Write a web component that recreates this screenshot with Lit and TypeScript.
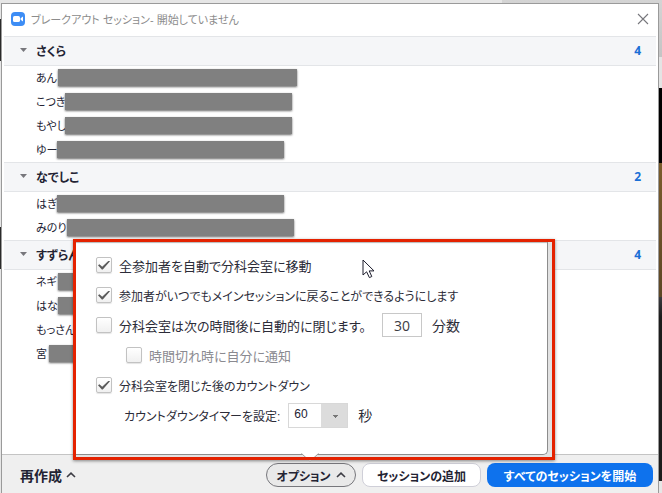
import { LitElement, html, css, svg, nothing } from "lit";
import { customElement } from "lit/decorators.js";

interface Member {
  name: string;
  nameWidth: number;
  maskWidth?: number;
}

interface Room {
  name: string;
  count: number;
  members: Member[];
}

const rooms: Room[] = [
  {
    name: "さくら",
    count: 4,
    members: [
      { name: "あん", nameWidth: 22, maskWidth: 239 },
      { name: "こつき", nameWidth: 29, maskWidth: 227 },
      { name: "もやし", nameWidth: 29, maskWidth: 227 },
      { name: "ゆー", nameWidth: 21, maskWidth: 227 },
    ],
  },
  {
    name: "なでしこ",
    count: 2,
    members: [
      { name: "はぎ", nameWidth: 21, maskWidth: 227 },
      { name: "みのり", nameWidth: 31, maskWidth: 227 },
    ],
  },
  {
    name: "すずらん",
    count: 4,
    members: [
      { name: "ネギ", nameWidth: 22, maskWidth: 227 },
      { name: "はな", nameWidth: 22, maskWidth: 227 },
      { name: "もっさん", nameWidth: 40 },
      { name: "宮", nameWidth: 13, maskWidth: 227 },
    ],
  },
];

const caret = () => html`<svg class="caret" viewBox="0 0 10 6" width="10" height="6" aria-hidden="true">
  ${svg`<path d="M1 5 L5 1.2 L9 5" fill="none" stroke="#3c3c44" stroke-width="1.6" />`}
</svg>`;

@customElement("option-popup")
export class OptionPopup extends LitElement {
  static styles = css`
    :host {
      display: block;
      box-sizing: border-box;
      padding: 3px 7px 5px 3px;
      background: #e2e2e2;
      box-shadow: 0 1px 3px rgba(0, 0, 0, 0.45);
      color: #2c2c38;
      font-size: 13px;
    }
    :host::after {
      content: "";
      position: absolute;
      inset: 0;
      border: 3px solid #e42200;
      pointer-events: none;
    }
    .panel {
      position: relative;
      box-sizing: border-box;
      border-right: 1px solid #8c8c8c;
      border-bottom: 1px solid #8c8c8c;
      border-radius: 0 0 5px 0;
      background: #fff;
      padding: 8px 16px 24px 20px;
      box-shadow: inset 0 2px 1px -1px #b9b9b9;
    }
    .row {
      display: flex;
      align-items: center;
      height: 30px;
      white-space: nowrap;
    }
    .row.kana {
      font-size: 12px;
    }
    .row.nested {
      padding-left: 30px;
      color: #8a8a90;
    }
    .row.timer {
      padding-left: 28px;
    }
    .unit {
      font-size: 14px;
    }
    label.tick {
      display: flex;
      align-items: center;
      gap: 7px;
    }
    .tick input {
      appearance: none;
      box-sizing: border-box;
      width: 16px;
      height: 16px;
      margin: 0;
      border: 1px solid #c2c2c2;
      border-radius: 2px;
      background: linear-gradient(#fff, #f0f0f0);
      display: grid;
      place-items: center;
      box-shadow: 0 1px 1px #e4e4e4;
    }
    .tick input:checked::after {
      content: "";
      width: 12px;
      height: 9px;
      background: #5a5a5a;
      clip-path: polygon(0 54%, 12% 42%, 35% 70%, 90% 0, 100% 8%, 40% 100%, 32% 100%);
    }
    .minutes {
      box-sizing: border-box;
      width: 40px;
      height: 24px;
      margin: 0 10px 0 16px;
      border: 1px solid #c8c8c8;
      padding: 0;
      text-align: center;
      font: 14px "Open Sans", "Noto Sans", sans-serif;
      color: #3c3c44;
      background: #fff;
    }
    .seconds {
      appearance: none;
      box-sizing: border-box;
      width: 60px;
      height: 25px;
      margin: 0 10px 0 8px;
      border: 1px solid #d8d8d8;
      border-radius: 0;
      padding: 0 0 2px 5px;
      font: 12px "Liberation Sans", sans-serif;
      color: #232333;
      background:
        linear-gradient(#777, #777) 44px 11px / 5px 1px no-repeat,
        linear-gradient(#777, #777) 45px 12px / 3px 1px no-repeat,
        linear-gradient(#777, #777) 46px 13px / 1px 1px no-repeat,
        linear-gradient(#dcdcdc, #dcdcdc) right / 26px 100% no-repeat,
        #fff;
    }
    .tail {
      position: absolute;
      left: 225px;
      top: 100%;
      width: 18px;
      height: 9px;
      margin-top: -1px;
      display: block;
    }
  `;

  render() {
    return html`
      <div class="panel">
        <div class="row">
          <label class="tick"><input type="checkbox" checked />全参加者を自動で分科会室に移動</label>
        </div>
        <div class="row kana">
          <label class="tick"><input type="checkbox" checked />参加者がいつでもメインセッションに戻ることができるようにします</label>
        </div>
        <div class="row">
          <label class="tick"><input type="checkbox" />分科会室は次の時間後に自動的に閉じます。</label>
          <input class="minutes" id="minutes" type="text" value="30" />
          <label class="unit" for="minutes">分数</label>
        </div>
        <div class="row nested">
          <label class="tick"><input type="checkbox" />時間切れ時に自分に通知</label>
        </div>
        <div class="row kana">
          <label class="tick"><input type="checkbox" checked />分科会室を閉じた後のカウントダウン</label>
        </div>
        <div class="row kana timer">
          <label for="seconds">カウントダウンタイマーを設定:</label>
          <select class="seconds" id="seconds"><option>60</option></select>
          <span class="unit">秒</span>
        </div>
        <svg class="tail" viewBox="0 0 18 9" aria-hidden="true">
          ${svg`<path d="M0 0 H18 L9 8.5 Z" fill="#fff" /><path d="M0.5 0.5 L9 8.3 L17.5 0.5" fill="none" stroke="#999" />`}
        </svg>
      </div>
    `;
  }
}

@customElement("app-root")
export class AppRoot extends LitElement {
  static styles = css`
    :host {
      display: block;
      box-sizing: border-box;
      min-height: 100vh;
      padding: 3px 3px 0 1px;
      font-family: "Liberation Sans", "Noto Sans CJK JP", sans-serif;
      font-feature-settings: "palt";
      font-size: 12px;
      color: #232333;
      background:
        linear-gradient(#2a2a2a, #2a2a2a) left 19px / 1px 42px no-repeat,
        linear-gradient(#2a2a2a, #2a2a2a) left 227px / 1px 42px no-repeat,
        linear-gradient(#d4d4d4, #c4c4c4) right top / 160px 57px no-repeat,
        linear-gradient(#e4e4e4, #e4e4e4) right 57px / 4px 31px no-repeat,
        linear-gradient(#000, #000) right 88px / 4px 75px no-repeat,
        linear-gradient(#7a5c2c, #5d4726) right 163px / 4px 134px no-repeat,
        linear-gradient(#3a3a3e, #1c1c1c) right 297px / 4px 20px no-repeat,
        linear-gradient(#1c1c1c, #1c1c1c) right 317px / 4px 164px no-repeat,
        #e6e6e6;
    }
    .dialog {
      position: relative;
      display: flex;
      flex-direction: column;
      box-sizing: border-box;
      min-height: calc(100vh - 3px);
      border: 1px solid #9a9a9a;
      border-bottom: 0;
      background: #fff;
    }
    header {
      display: flex;
      align-items: center;
      height: 32px;
      box-sizing: border-box;
      padding: 0 9px 3px 9px;
      gap: 6px;
    }
    h1 {
      flex: 1;
      margin: 0;
      font-size: 11px;
      font-weight: 400;
      color: #8c8c8c;
    }
    .close {
      width: 12px;
      height: 12px;
      padding: 0;
      border: 0;
      background: none;
      display: block;
    }
    svg {
      display: block;
    }
    main {
      flex: 1;
      padding: 0 2px;
    }
    .band {
      display: flex;
      align-items: center;
      box-sizing: border-box;
      height: 30px;
      padding: 0 15px 2px 16px;
      border: solid #e3e5e8;
      border-width: 1px 0;
      background: #f5f6f8;
    }
    .toggle {
      flex: 1;
      display: flex;
      align-items: center;
      gap: 9px;
      padding: 0;
      border: 0;
      background: none;
      font: inherit;
      font-weight: 700;
      color: inherit;
      font-feature-settings: inherit;
    }
    .count {
      font: 700 12px "Open Sans", "Noto Sans", sans-serif;
      color: #1a6fd6;
    }
    ul {
      list-style: none;
      margin: 0;
      padding: 0 0 0 32px;
      font-size: 11px;
    }
    li {
      display: flex;
      align-items: center;
      box-sizing: border-box;
      height: 24px;
      padding-bottom: 2px;
      white-space: nowrap;
    }
    .mask {
      position: relative;
      height: 17px;
      background: #808080;
      box-shadow: 0 1px 2px rgba(0, 0, 0, 0.6);
    }
    footer {
      display: flex;
      align-items: center;
      box-sizing: border-box;
      height: 39px;
      padding: 2px 5px 0 17px;
      gap: 6px;
      border-top: 1px solid #c4c4c4;
      background: #efefef;
    }
    footer button {
      display: flex;
      align-items: center;
      justify-content: center;
      gap: 5px;
      box-sizing: border-box;
      height: 24px;
      padding: 0;
      border: 1px solid transparent;
      background: none;
      font: inherit;
      font-weight: 700;
      font-feature-settings: inherit;
      color: #232333;
      white-space: nowrap;
    }
    footer .recreate {
      margin-right: auto;
      gap: 4px;
      font-size: 14px;
    }
    footer .options {
      width: 90px;
      border-color: #77777c;
      border-radius: 12px;
      background: #e9e9e9;
    }
    footer .add {
      width: 119px;
      border-color: #cfcfd8;
      border-radius: 8px;
      background: #fff;
    }
    footer .start {
      width: 166px;
      border-radius: 8px;
      background: #0e72ed;
      color: #fff;
    }
    option-popup {
      position: absolute;
      left: 71px;
      right: 103px;
      bottom: 33px;
    }
    .pointer {
      position: absolute;
      left: 360px;
      bottom: 214px;
    }
  `;

  private renderRoom(room: Room) {
    return html`
      <section>
        <div class="band">
          <button class="toggle">
            <svg viewBox="0 0 7 4" width="7" height="4" aria-hidden="true">
              ${svg`<path d="M0 0 H7 L3.5 4 Z" fill="#77777c" />`}
            </svg>
            ${room.name}
          </button>
          <span class="count">${room.count}</span>
        </div>
        <ul>
          ${room.members.map(
            (m) => html`<li>
              <span style="width:${m.nameWidth}px">${m.name}</span>
              ${m.maskWidth ? html`<span class="mask" style="width:${m.maskWidth}px"></span>` : nothing}
            </li>`
          )}
        </ul>
      </section>
    `;
  }

  render() {
    return html`
      <div class="dialog">
        <header>
          <svg viewBox="0 0 14 14" width="14" height="14" aria-hidden="true">
            ${svg`<rect width="14" height="14" rx="4" fill="#3d8df5" />
            <rect x="2" y="4" width="7" height="6" rx="1.6" fill="#fff" />
            <path d="M9.6 6.2 L12 4.4 V9.6 L9.6 7.8 Z" fill="#fff" />`}
          </svg>
          <h1>ブレークアウト セッション- 開始していません</h1>
          <button class="close" aria-label="閉じる">
            <svg viewBox="0 0 12 12" width="12" height="12">
              ${svg`<path d="M1 1 L11 11 M11 1 L1 11" fill="none" stroke="#77777c" stroke-width="1.1" />`}
            </svg>
          </button>
        </header>
        <main>${rooms.map((room) => this.renderRoom(room))}</main>
        <footer>
          <button class="recreate">再作成 ${caret()}</button>
          <button class="options">オプション ${caret()}</button>
          <button class="add">セッションの追加</button>
          <button class="start">すべてのセッションを開始</button>
        </footer>
        <option-popup></option-popup>
        <svg class="pointer" viewBox="0 0 13 20" width="13" height="20" aria-hidden="true">
          ${svg`<path d="M1 1 V16 L4.6 12.8 L7.4 18.6 L9.8 17.5 L7.2 11.9 H12 Z" fill="#fff" stroke="#1c1c2c" stroke-width="1" />`}
        </svg>
      </div>
    `;
  }
}
